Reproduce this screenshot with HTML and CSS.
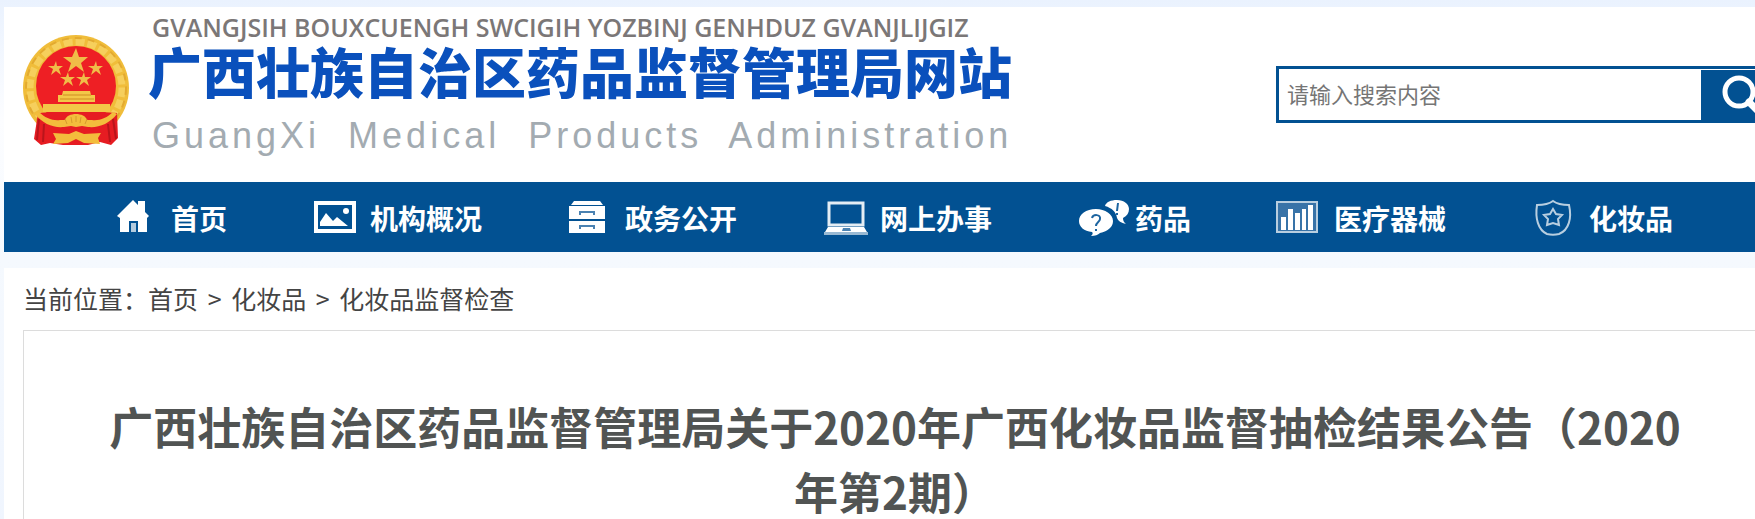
FILE: index.html
```html
<!DOCTYPE html>
<html lang="zh-CN">
<head>
    <meta charset="UTF-8">
    <meta name="viewport" content="width=device-width, initial-scale=1.0">
    <title>广西壮族自治区药品监督管理局网站</title>
    <link rel="stylesheet" href="styles.css">
</head>
<body>
    <div class="page">
        <header class="header">
            <a class="logo" href="#">
                <svg class="emblem" viewBox="0 0 108 112" aria-hidden="true">
                    <!-- 麦穗圆环 -->
                    <circle cx="54" cy="54" r="53" fill="#f0bd3a"/>
                    <circle cx="54" cy="54" r="46" fill="none" stroke="#f6cf5c" stroke-width="7" stroke-dasharray="9 3"/>
                    <circle cx="54" cy="54" r="50" fill="none" stroke="#e3aa30" stroke-width="2" stroke-dasharray="7 6"/>
                    <circle cx="54" cy="52" r="40" fill="#ee1f24"/>
                    <!-- 五角星 -->
                    <g fill="#f0bd48">
                        <path d="M54 14l3 9h9l-7 6 3 9-8-6-8 6 3-9-8-6h9z"/>
                        <path d="M34 27l1 5h6l-4 3 2 6-5-4-5 4 2-6-5-3h6z"/>
                        <path d="M74 27l1 5h6l-4 3 2 6-5-4-5 4 2-6-5-3h6z"/>
                        <path d="M46 38l1 5h6l-4 3 2 6-5-4-5 4 2-6-5-3h6z"/>
                        <path d="M62 38l1 5h6l-4 3 2 6-5-4-5 4 2-6-5-3h6z"/>
                    </g>
                    <!-- 天安门和红绸 -->
                    <path d="M16 79l15-1h48l16 1 1 25-7 7-11-3-12 3H41l-13-2-9 2-7-6z" fill="#e61c22"/>
                    <path d="M41 57h27l1 4h4v7H36v-7h4zM21 70h67v8H21z" fill="#f3c748"/>
                    <path d="M41 61h28M38 65h34" stroke="#cf8d22" fill="none"/>
                    <path d="M13 80c8 10 18 14 29 13l7-1 5 1 6-1 6 1c11 1 21-3 29-13l-4-2c-6 6-14 9-21 8h-5c-1-4-6-6-11-6s-10 2-11 6h-5c-7 1-15-2-21-8z" fill="#f3bd3c"/>
                    <path d="M45 90l-2-5M50 89l-1-6M54 88v-6M58 89l1-6M63 90l2-5" stroke="#d69a2c" fill="none"/>
                    <path d="M31 99l16 1 7-3 8 3 17-1-3 5 2 6-16-1-8-4-8 4-15 1 3-5z" fill="#f3bd3c"/>
                    <path d="M17 85l-2 21M22 90l-1 18M91 85l3 20M86 90l2 18" stroke="#b9151b" stroke-width="2" fill="none"/>
                </svg>
                <span class="logo-text">
                    <span class="logo-zhuang">GVANGJSIH BOUXCUENGH SWCIGIH YOZBINJ GENHDUZ GVANJLIJGIZ</span>
                    <span class="logo-name">广西壮族自治区药品监督管理局网站</span>
                    <span class="logo-en">GuangXi&nbsp; Medical&nbsp; Products&nbsp; Administration</span>
                </span>
            </a>
            <form class="search">
                <input class="search-input" type="text" placeholder="请输入搜索内容" aria-label="请输入搜索内容">
                <button class="search-button" type="button" aria-label="搜索">
                    <svg width="40" height="40" viewBox="0 0 40 40" fill="none" stroke="#fff" aria-hidden="true">
                        <circle cx="18" cy="18" r="14" stroke-width="5"/>
                        <path d="M28 28l9 9" stroke-width="7" stroke-linecap="round"/>
                    </svg>
                </button>
            </form>
        </header>

        <nav class="nav">
            <a class="nav-item" href="#">
                <svg class="nav-icon" viewBox="0 0 56 40" fill="#fff" aria-hidden="true">
                    <path d="M2 21L18 5l5 5V6h7v11l4 4-2 2v14h-9V26h-9v11H5V23z"/>
                    <path d="M16 28h5v9h-5z" opacity=".7"/>
                </svg>首页</a>
            <a class="nav-item" href="#">
                <svg class="nav-icon" viewBox="0 0 56 40" fill="#fff" aria-hidden="true">
                    <path d="M2 8h38v28H2z" fill="none" stroke="#fff" stroke-width="4"/>
                    <path d="M6 31v-4l6-9 7 8 4-4 11 9z"/>
                    <circle cx="32" cy="16" r="3"/>
                </svg>机构概况</a>
            <a class="nav-item" href="#">
                <svg class="nav-icon" viewBox="0 0 56 40" fill="#fff" aria-hidden="true">
                    <path d="M5 6h26l3 4H2z"/>
                    <path d="M0 11h36v13H0zM0 26h36v12H0z"/>
                    <path d="M11 20v-3h14v3M11 34v-3h14v3" fill="none" stroke="#4a82b2" stroke-width="2"/>
                </svg>政务公开</a>
            <a class="nav-item" href="#">
                <svg class="nav-icon" viewBox="0 0 56 40" fill="#fff" aria-hidden="true">
                    <path d="M5 8h34v22H5z" fill="none" stroke="#e4edf4" stroke-width="3"/>
                    <path d="M4 32h36l3 5H1z"/>
                    <path d="M0 37h44v3H0z" opacity=".6"/>
                    <path d="M19 33h7l1 3h-9z" fill="#4a82b2"/>
                </svg>网上办事</a>
            <a class="nav-item" href="#">
                <svg class="nav-icon" viewBox="0 0 56 40" fill="#fff" aria-hidden="true">
                    <path d="M26 11c1-4 6-6 12-6 7 0 12 4 12 9 0 4-2 7-6 9 0 3 1 4 3 6-5-1-8-3-9-6-1-6-5-10-12-12z"/>
                    <path d="M17 14c9 0 17 5 17 12 0 6-5 10-13 12-2 2-5 3-9 3 2-2 2-3 1-4C5 36 0 32 0 26c0-7 7-12 17-12z"/>
                    <path d="M13 23c1-4 9-4 8 1 0 3-4 3-4 7M17 34v2" fill="none" stroke="#1c64a0" stroke-width="2"/>
                    <path d="M39 8l-1 8M38 18v2" fill="none" stroke="#1c64a0" stroke-width="2"/>
                </svg>药品</a>
            <a class="nav-item" href="#">
                <svg class="nav-icon" viewBox="0 0 56 40" fill="#fff" aria-hidden="true">
                    <path d="M-1 7h40v30H-1z" fill="#3873a8" stroke="#b8cee0" stroke-width="2"/>
                    <path d="M3 22h5v13H3zM10 14h5v21h-5zM17 18h5v17h-5zM24 14h4v21h-4zM30 10h5v25h-5z"/>
                </svg>医疗器械</a>
            <a class="nav-item" href="#">
                <svg class="nav-icon" viewBox="0 0 56 40" fill="none" stroke="#b8cee0" stroke-width="2" aria-hidden="true">
                    <path d="M20 6c4 3 9 4 16 4 3 13 0 25-10 29-4 1-8 1-12 0C5 35 2 23 4 10c6 0 12-1 16-4z"/>
                    <path d="M20 14l3 5 6 1-4 4 1 6-6-2-6 2 1-6-4-4 6-1z"/>
                </svg>化妆品</a>
        </nav>

        <main class="content">
            <div class="breadcrumb">当前位置：<a href="#">首页</a> <span class="sep">&gt;</span> <a href="#">化妆品</a> <span class="sep">&gt;</span> <a href="#">化妆品监督检查</a></div>
            <article class="article">
                <h1 class="article-title">广西壮族自治区药品监督管理局关于2020年广西化妆品监督抽检结果公告（2020年第2期）</h1>
            </article>
        </main>
    </div>
</body>
</html>
```
FILE: styles.css
```css
* {
    box-sizing: border-box;
}
body {
    margin: 0;
    padding: 7px 0 0 4px;
    overflow: hidden;
    background: #f3f8fe linear-gradient(#eaf2fe, #fcfdff 120px, #f5f9fe 260px, #eef4fe);
    font-family: "Noto Sans CJK SC", sans-serif;
    color: #444;
}
a {
    color: inherit;
    text-decoration: none;
}
/* 页面比窗口宽时右侧被裁掉 */
.page {
    min-width: 1782px;
}
/* 页头 */
.header {
    display: flex;
    justify-content: space-between;
    align-items: flex-start;
    height: 175px;
    padding-left: 18px;
    background: #fff;
}
.logo {
    display: flex;
    gap: 18px;
}
.emblem {
    width: 108px;
    height: 112px;
    margin-top: 27px;
}
.logo-text {
    display: flex;
    flex-direction: column;
    padding-top: 6px;
    white-space: nowrap;
}
.logo-zhuang {
    padding-left: 4px;
    font-family: "Open Sans", sans-serif;
    font-size: 25px;
    line-height: 28px;
    font-weight: 600;
    color: #7b7777;
}
.logo-name {
    font-size: 54px;
    line-height: 60px;
    font-weight: 900;
    color: #0a50bc;
}
.logo-en {
    padding-left: 4px;
    font-family: "Liberation Sans", Arial, sans-serif;
    font-size: 36px;
    line-height: 70px;
    letter-spacing: 4px;
    color: #a3abb1;
}
/* 搜索 */
.search {
    display: flex;
    width: 510px;
    height: 57px;
    margin-top: 59px;
    border: 3px solid #025192;
}
.search-input {
    width: 422px;
    padding: 0 8px 4px;
    border: 0;
    outline: none;
    font-family: inherit;
    font-size: 22px;
    color: #444;
}
.search-input::placeholder {
    color: #757575;
}
.search-button {
    flex: 1;
    margin-top: 1px;
    padding: 4px 20px;
    border: 0;
    background: #025192;
    text-align: left;
    cursor: pointer;
}
/* 导航 */
.nav {
    display: flex;
    gap: 87px;
    height: 70px;
    padding-left: 111px;
    background: #025192;
}
.nav-item {
    display: flex;
    align-items: center;
    padding-top: 2px;
    font-size: 28px;
    font-weight: bold;
    white-space: nowrap;
    color: #fff;
}
.nav-icon {
    width: 56px;
    height: 40px;
    margin-bottom: 6px;
    overflow: visible;
}
/* 正文 */
.content {
    margin-top: 16px;
    padding: 11px 19px;
    background: #fff;
}
.breadcrumb {
    padding-bottom: 13px;
    font-size: 25px;
    line-height: 38px;
}
.sep {
    margin: 0 4px;
}
.article {
    padding: 63px 80px;
    border: 1px solid #dcdcdc;
}
.article-title {
    margin: 0;
    font-size: 44px;
    line-height: 65px;
    text-align: center;
    color: #515453;
}
```
